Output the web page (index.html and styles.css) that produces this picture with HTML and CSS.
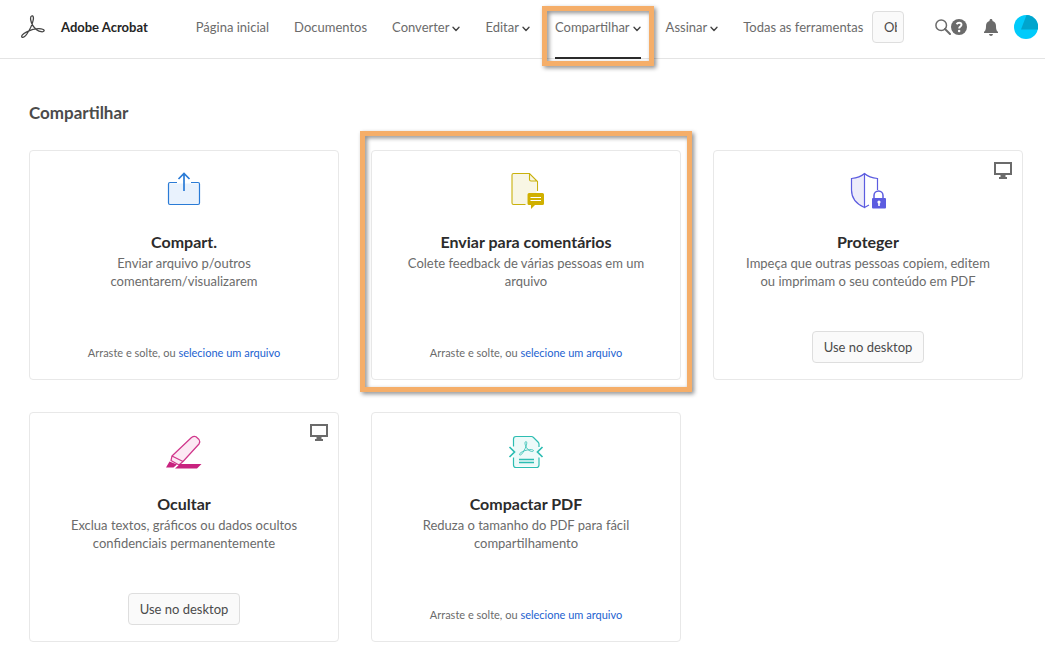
FILE: index.html
```html
<!DOCTYPE html>
<html lang="pt-BR">
<head>
<meta charset="utf-8">
<meta name="viewport" content="width=device-width, initial-scale=1">
<title>Adobe Acrobat</title>
<link rel="stylesheet" href="styles.css">
</head>
<body>
<svg class="defs" aria-hidden="true">
  <symbol id="chevron" viewBox="0 0 8 6"><path d="M1 1.200 4 4.400 7 1.200" fill="none" stroke="currentColor" stroke-width="1.400" stroke-linecap="round" stroke-linejoin="round"/></symbol>
  <symbol id="acrobat" viewBox="0 0 24 24"><path d="M10.600 1c1.500-.7 2.200 1.200 1.600 4-.8 4.200-3.400 9.700-6.300 14-1.700 2.500-3.700 4-4.800 3.200-1.200-1 .6-3.300 4.200-5.100 4.600-2.300 11.200-3.700 14.800-3.300 2.500.3 3.400 1.300 2.900 2.200-.8 1.400-4.400.9-7.100-1.100-3.300-2.400-5.600-6.600-6.200-10-.3-2 .1-3.500.9-3.900Z" fill="none" stroke="currentColor" stroke-width="1.300" stroke-linejoin="round"/></symbol>
  <symbol id="desktop" viewBox="0 0 18 17"><path fill="currentColor" fill-rule="evenodd" d="M0 0h18v13h-6.500v2H13v2H5v-2h1.500v-2H0ZM2 2v9h14V2Z"/></symbol>
</svg>

<header class="topbar">
  <svg class="logo" aria-hidden="true"><use href="#acrobat"/></svg>
  <span class="brand">Adobe Acrobat</span>
  <nav class="nav">
    <a class="nav-item" href="#">Página inicial</a>
    <a class="nav-item" href="#">Documentos</a>
    <button class="nav-item" type="button">Converter<svg class="chevron" aria-hidden="true"><use href="#chevron"/></svg></button>
    <button class="nav-item" type="button">Editar<svg class="chevron" aria-hidden="true"><use href="#chevron"/></svg></button>
    <button class="nav-item nav-item-current" type="button">Compartilhar<svg class="chevron" aria-hidden="true"><use href="#chevron"/></svg><span class="callout callout-nav"></span></button>
    <button class="nav-item" type="button">Assinar<svg class="chevron" aria-hidden="true"><use href="#chevron"/></svg></button>
    <a class="nav-item" href="#">Todas as ferramentas</a>
  </nav>
  <button class="button button-clipped" type="button"><span class="clip">Ob</span></button>
  <div class="tools">
    <button class="tool" type="button" aria-label="Pesquisar"><svg width="16" height="16" viewBox="0 0 16 16" fill="none" stroke="currentColor"><circle cx="6.200" cy="6.200" r="5.300" stroke-width="1.500"/><path d="m10 10 5 5" stroke-width="2" stroke-linecap="round"/></svg></button>
    <button class="tool" type="button" aria-label="Ajuda"><svg width="16" height="16" viewBox="0 0 16 16"><circle cx="8" cy="8" r="8" fill="currentColor"/><path d="M5.600 5.300C6.200 4.200 7 3.800 8.100 3.800c1.500 0 2.400.8 2.400 2 0 1.700-2.400 1.700-2.400 3.700" fill="none" stroke="#fff" stroke-width="1.900"/><circle cx="8.100" cy="12" r="1.250" fill="#fff"/></svg></button>
    <button class="tool tool-bell" type="button" aria-label="Notificações"><svg width="14" height="17" viewBox="0 0 14 17" fill="currentColor"><path d="M7 0c.9 0 1.500.6 1.500 1.500v.5c2.300.7 3.500 2.600 3.500 5 0 4 .9 4.800 2 6v1H0v-1c1.100-1.200 2-2 2-6 0-2.400 1.200-4.300 3.500-5v-.5C5.500.6 6.100 0 7 0ZM5 15h4c-.2 1.200-1 2-2 2s-1.800-.8-2-2Z"/></svg></button>
    <button class="tool" type="button" aria-label="Conta"><svg width="24" height="24" viewBox="0 0 24 24"><circle cx="12" cy="12" r="12" fill="#00cbfb"/><path d="M12.500 0a12 12 0 0 1 11.400 14.500L7 14.500Z" fill="#00a5cd"/></svg></button>
  </div>
</header>

<main class="page">
  <h1 class="heading">Compartilhar</h1>
  <div class="cards">
    <section class="card">
      <svg class="icon" viewBox="0 0 40 40" fill="none" stroke="#2a7bd6" aria-hidden="true"><path d="M4.500 12.500h31v21h-31Z" fill="#e9f2fd" stroke="none"/><path d="M13 11.500H6q-1.500 0-1.500 1.500v19q0 1.500 1.500 1.500h28q1.500 0 1.500-1.500V13q0-1.500-1.500-1.500h-7" stroke-width="1.200"/><path d="M20 20V3M14.500 8 20 2.500 25.500 8" stroke-width="1.700"/></svg>
      <h2 class="title">Compart.</h2>
      <p class="text">Enviar arquivo p/outros comentarem/visualizarem</p>
      <p class="drop">Arraste e solte, ou <a class="link" href="#">selecione um arquivo</a></p>
    </section>

    <section class="card">
      <svg class="icon" viewBox="0 0 40 40" fill="none" stroke="#c9b10c" aria-hidden="true"><path d="M7.500 2.500h16l7 7v13h-9v11h-14q-1.500 0-1.500-1.500V4q0-1.500 1.500-1.500Z" fill="#f8f6e4" stroke="none"/><path d="M19.500 33.500h-12Q6 33.500 6 32V4q0-1.500 1.500-1.500h16l8 8V20M23.500 2.500v6q0 1.500 1.500 1.500h6" stroke-width="1.100"/><path d="M23 22h13.500q1.500 0 1.500 1.500v9q0 1.500-1.500 1.500H29l-4 4v-4h-2q-1.500 0-1.500-1.500v-9q0-1.500 1.500-1.500Z" fill="#d0b000" stroke="none"/><path d="M24.500 26.500h10.500M24.500 29.500h10.500" stroke="#fff" stroke-width="1.200"/></svg>
      <h2 class="title">Enviar para comentários</h2>
      <p class="text">Colete feedback de várias pessoas em um arquivo</p>
      <p class="drop">Arraste e solte, ou <a class="link" href="#">selecione um arquivo</a></p>
      <span class="callout callout-card"></span>
    </section>

    <section class="card">
      <svg class="badge" role="img" aria-label="Desktop"><use href="#desktop"/></svg>
      <svg class="icon" viewBox="0 0 40 40" fill="none" stroke="#5c5ce0" aria-hidden="true"><path d="M16.500 2.500C12.500 6 8 7 3.500 7.500V19c0 9 6 14.500 13 17.500Z" fill="#edecfa" stroke="none"/><path d="M29.500 19V7.500C25 7 20.500 6 16.500 2.500 12.500 6 8 7 3.500 7.500V19c0 9 6 14.500 13 17.500V3M16.500 36.500 21 34" stroke-width="1.200"/><path d="M26 28v-3.500a4.500 4.500 0 0 1 9 0V28" stroke-width="1.500"/><rect x="24" y="27" width="14" height="10.500" rx="1" fill="#5c5ce0" stroke="none"/><circle cx="31" cy="31" r="1.600" fill="#fff" stroke="none"/><path d="M31 31v4" stroke="#fff" stroke-width="1.600"/></svg>
      <h2 class="title">Proteger</h2>
      <p class="text">Impeça que outras pessoas copiem, editem ou imprimam o seu conteúdo em PDF</p>
      <button class="button button-card" type="button">Use no desktop</button>
    </section>

    <section class="card">
      <svg class="badge" role="img" aria-label="Desktop"><use href="#desktop"/></svg>
      <svg class="icon" viewBox="0 0 40 40" fill="none" stroke="#d0368b" aria-hidden="true"><path d="M7 23 26.500 4.500 31 3.500l4.500 4v4L18 29.500l-3 2.500-8-4.500Z" fill="#fce9f4" stroke="none"/><path d="M8 23 27.500 4.500q2.500-1.800 4.500-.700l3 2.700q1.500 2 0 4.500L19 28.500l-4 3.500-8-4.500ZM8 23l11 5.500" stroke-width="1.200" stroke-linejoin="round"/><path d="M5.500 28.500 2 34.500h7.500l3.500-3Z" fill="#c8227f" stroke="none"/><path d="M16 31h21.500L33 35.500H11Z" fill="#c8227f" stroke="none"/></svg>
      <h2 class="title">Ocultar</h2>
      <p class="text">Exclua textos, gráficos ou dados ocultos confidenciais permanentemente</p>
      <button class="button button-card" type="button">Use no desktop</button>
    </section>

    <section class="card">
      <svg class="icon" viewBox="0 0 40 40" fill="none" stroke="#2dbdb2" aria-hidden="true"><path d="M8.500 4h18L33 10.500v23H7.500V5Z" fill="#edfaf9" stroke="none"/><path d="M7.500 13.500V6Q7.500 3.500 10 3.500h15.500q1 0 2 1l4.500 4.500q1 1 1 2v3M7.500 24.500V32q0 2.500 2.500 2.500h20.500q2.500 0 2.500-2.500v-7.500" stroke-width="1.200"/><path d="m3.500 14 5 5-5 5M36.500 14l-5 5 5 5" stroke-width="1.700"/><path d="M13 26.500h15M13 29.500h15" stroke-width="1.300"/><svg x="13" y="8" width="15" height="15" class="mini"><use href="#acrobat"/></svg></svg>
      <h2 class="title">Compactar PDF</h2>
      <p class="text">Reduza o tamanho do PDF para fácil compartilhamento</p>
      <p class="drop">Arraste e solte, ou <a class="link" href="#">selecione um arquivo</a></p>
    </section>
  </div>
</main>
</body>
</html>
```

FILE: styles.css
```css
* {
  box-sizing: border-box;
}

body {
  margin: 0;
  background: #fff;
  color: #6b6b6b;
  font-family: Lato, "Noto Sans", sans-serif;
  font-size: 13px;
  line-height: 18px;
}

button {
  margin: 0;
  font: inherit;
  cursor: pointer;
}

.defs {
  display: none;
}

.topbar {
  display: flex;
  align-items: center;
  height: 59px;
  padding: 0 7px 4px 21px;
  border-bottom: 1px solid #e4e4e4;
}

.logo {
  flex: none;
  width: 24px;
  height: 24px;
  color: #444;
}

.brand {
  margin-left: 16px;
  color: #252525;
  font-weight: 700;
  white-space: nowrap;
}

.nav {
  display: flex;
  gap: 25px;
  margin-left: 48px;
}

.nav-item {
  position: relative;
  display: flex;
  align-items: center;
  gap: 3px;
  padding: 0;
  border: 0;
  background: none;
  color: #6b6b6b;
  text-decoration: none;
  white-space: nowrap;
}

.chevron {
  width: 8px;
  height: 6px;
  margin-top: 4px;
  color: #444;
}

.nav-item-current::after {
  content: "";
  position: absolute;
  right: 0;
  bottom: -23px;
  left: 0;
  height: 2px;
  background: #2c2c2c;
}

.callout {
  position: absolute;
  z-index: 1;
  border: 5px solid #f5ae69;
  filter: drop-shadow(2px 2px 2px rgba(0, 0, 0, 0.45));
  pointer-events: none;
}

.callout-nav {
  inset: -12px -13px -30px;
}

.callout-card {
  inset: -20px -12px -13px -12px;
}

.button {
  height: 32px;
  padding: 0 11px;
  border: 1px solid #dedede;
  border-radius: 4px;
  background: #fafafa;
  color: #4b4b4b;
  white-space: nowrap;
}

.button-clipped {
  flex: none;
  width: 32px;
  margin-left: auto;
}

.clip {
  display: block;
  overflow: hidden;
  width: 13px;
  text-align: left;
}

.tools {
  display: flex;
  flex: none;
  align-items: center;
  margin-left: 31px;
}

.tool {
  display: flex;
  padding: 0;
  border: 0;
  background: none;
  color: #6b6b6b;
}

.tool-bell {
  margin: 0 16px 0 17px;
}

.page {
  padding: 42px 22px 27px 29px;
}

.heading {
  margin: 0 0 25px;
  color: #4b4b4b;
  font-size: 17px;
  font-weight: 700;
  line-height: 24px;
}

.cards {
  display: grid;
  grid-template-columns: repeat(3, 1fr);
  gap: 32px;
}

.card {
  position: relative;
  display: flex;
  flex-direction: column;
  align-items: center;
  min-height: 230px;
  padding: 20px 30px 16px;
  border: 1px solid #e8e8e8;
  border-radius: 4px;
  text-align: center;
}

.icon {
  width: 40px;
  height: 40px;
}

.mini {
  color: #2dbdb2;
}

.badge {
  position: absolute;
  top: 11px;
  right: 10px;
  width: 18px;
  height: 17px;
  color: #6b6b6b;
}

.title {
  margin: 20px 0 1px;
  color: #2c2c2c;
  font-size: 16px;
  font-weight: 700;
  line-height: 22px;
}

.text {
  max-width: 250px;
  margin: 0;
}

.drop {
  margin: auto 0 0;
  padding-bottom: 1px;
  font-size: 11px;
  line-height: 18px;
}

.link {
  color: #1c62d0;
  text-decoration: none;
}

.button-card {
  margin-top: auto;
}
```
